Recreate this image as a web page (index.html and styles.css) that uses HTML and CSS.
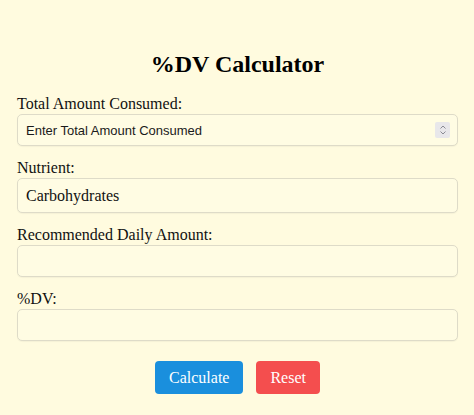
FILE: index.html
```html
<!DOCTYPE html>
<html>
<head>
<meta charset="utf-8">
<link rel="stylesheet" href="styles.css">
</head>
<body>
<div class="calc">
  <h2 class="title">%DV Calculator</h2>
  <div class="field">
    <label class="label" for="total">Total Amount Consumed:</label>
    <div class="num-wrap">
      <input class="input input-num" id="total" type="text" placeholder="Enter Total Amount Consumed">
      <span class="spin"><svg width="14" height="14" viewBox="0 0 14 14"><path d="M4.5 5.5 L7 3 L9.5 5.5" fill="none" stroke="#8a8a94" stroke-width="1"/><path d="M4.5 8.5 L7 11 L9.5 8.5" fill="none" stroke="#8a8a94" stroke-width="1"/></svg></span>
    </div>
  </div>
  <div class="field">
    <label class="label" for="nutrient">Nutrient:</label>
    <input class="input input-serif" id="nutrient" type="text" value="Carbohydrates">
  </div>
  <div class="field">
    <label class="label" for="rda">Recommended Daily Amount:</label>
    <input class="input" id="rda" type="text">
  </div>
  <div class="field">
    <label class="label" for="dv">%DV:</label>
    <input class="input" id="dv" type="text">
  </div>
  <div class="actions">
    <button class="btn btn-calc" type="button">Calculate</button>
    <button class="btn btn-reset" type="button">Reset</button>
  </div>
</div>
</body>
</html>
```
FILE: styles.css
```css
html, body {
  margin: 0;
  padding: 0;
  background: #fffbdf;
}
.calc {
  padding: 51px 16px 20px 17px;
  font-family: "Liberation Serif", "Times New Roman", serif;
  color: #111;
}
.title {
  margin: 0 0 17px;
  font-size: 24px;
  font-weight: bold;
  text-align: center;
  line-height: normal;
  color: #000;
}
.field {
  margin-bottom: 13px;
}
.label {
  display: block;
  font-size: 16px;
  line-height: normal;
  margin-bottom: 1px;
}
.num-wrap {
  position: relative;
}
.input {
  display: block;
  box-sizing: border-box;
  width: 100%;
  height: 32px;
  margin: 0;
  padding: 0 8px;
  border: 1px solid #dedbc8;
  border-radius: 5px;
  background: #fffce3;
  font-family: "Liberation Sans", Arial, sans-serif;
  font-size: 13px;
  color: #222;
  box-shadow: 0 1px 1px rgba(0,0,0,0.04);
  outline: none;
}
.input::placeholder {
  color: #1a1a1a;
  opacity: 1;
}
.input-serif {
  height: 35px;
  font-family: "Liberation Serif", "Times New Roman", serif;
  font-size: 16px;
  color: #111;
}
.spin {
  position: absolute;
  right: 8px;
  top: 8px;
  width: 15px;
  height: 16px;
  background: #e8e7ea;
  border-radius: 2px;
  display: flex;
  align-items: center;
  justify-content: center;
}
.actions {
  display: flex;
  justify-content: center;
  gap: 13px;
  padding-top: 7px;
}
.btn {
  height: 33px;
  padding: 0 14px;
  border: none;
  border-radius: 4px;
  font-family: "Liberation Serif", "Times New Roman", serif;
  font-size: 16px;
  color: #fff;
  cursor: pointer;
}
.btn-calc {
  background: #1a8fdd;
}
.btn-reset {
  background: #f44e4e;
}
```
